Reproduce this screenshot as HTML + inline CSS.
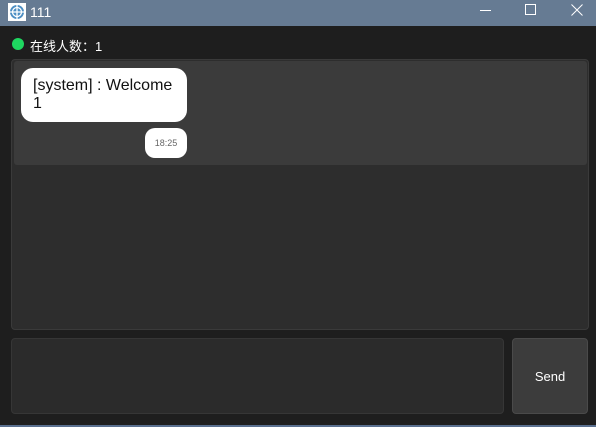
<!DOCTYPE html><html><head><style>
body{margin:0;width:596px;height:427px;background:#1e1e1e;position:relative;overflow:hidden;font-family:"Liberation Sans","Noto Sans CJK SC",sans-serif}
div{position:absolute;box-sizing:border-box}
svg{position:absolute;display:block}
</style></head><body>
<div style="left:0;top:0;width:596px;height:26px;background:#667b93"></div>
<svg style="left:8px;top:3px" width="18" height="18" viewBox="0 0 18 18"><rect width="18" height="18" fill="#fff"/><circle cx="9" cy="9" r="7" fill="#4d8fc4"/><circle cx="9" cy="9" r="4.5" fill="none" stroke="#fff" stroke-width="1.3"/><path d="M9 2v14M2 9h14" stroke="#fff" stroke-width="1.3"/></svg>
<div style="left:30px;top:4px;color:#fff;font-size:14px">111</div>
<svg style="left:480px;top:9px" width="12" height="3"><path d="M0 1.5h11" stroke="#fff"/></svg>
<svg style="left:525px;top:4px" width="12" height="12"><rect x="0.5" y="0.5" width="10" height="10" fill="none" stroke="#fff"/></svg>
<svg style="left:571px;top:4px" width="13" height="13"><path d="M0.5 0.5l11 11M11.5 0.5l-11 11" stroke="#fff"/></svg>
<div style="left:12px;top:38px;width:12px;height:12px;border-radius:50%;background:#1ed760"></div>
<div style="left:30px;top:36px;color:#fff;font-size:13px">在线人数：1</div>
<div style="left:11px;top:59px;width:578px;height:271px;background:#2d2d2d;border:1px solid #3a3a3a;border-radius:4px"></div>
<div style="left:14px;top:61px;width:573px;height:104px;background:#3b3b3b;border-radius:3px"></div>
<div style="left:21px;top:68px;width:166px;height:54px;background:#fff;border-radius:12px;padding:9px 12px;font-size:16px;line-height:18px;color:#111">[system] : Welcome 1</div>
<div style="left:145px;top:128px;width:42px;height:30px;background:#fff;border-radius:10px;font-size:9px;color:#666;text-align:center;line-height:30px">18:25</div>
<div style="left:11px;top:338px;width:493px;height:76px;background:#2b2b2b;border:1px solid #363636;border-radius:4px"></div>
<div style="left:512px;top:338px;width:76px;height:76px;background:#3c3c3c;border:1px solid #4a4a4a;border-radius:4px;color:#fff;font-size:13px;text-align:center;line-height:76px">Send</div>
<div style="left:0;top:425px;width:596px;height:2px;background:#5a7090"></div>
</body></html>
